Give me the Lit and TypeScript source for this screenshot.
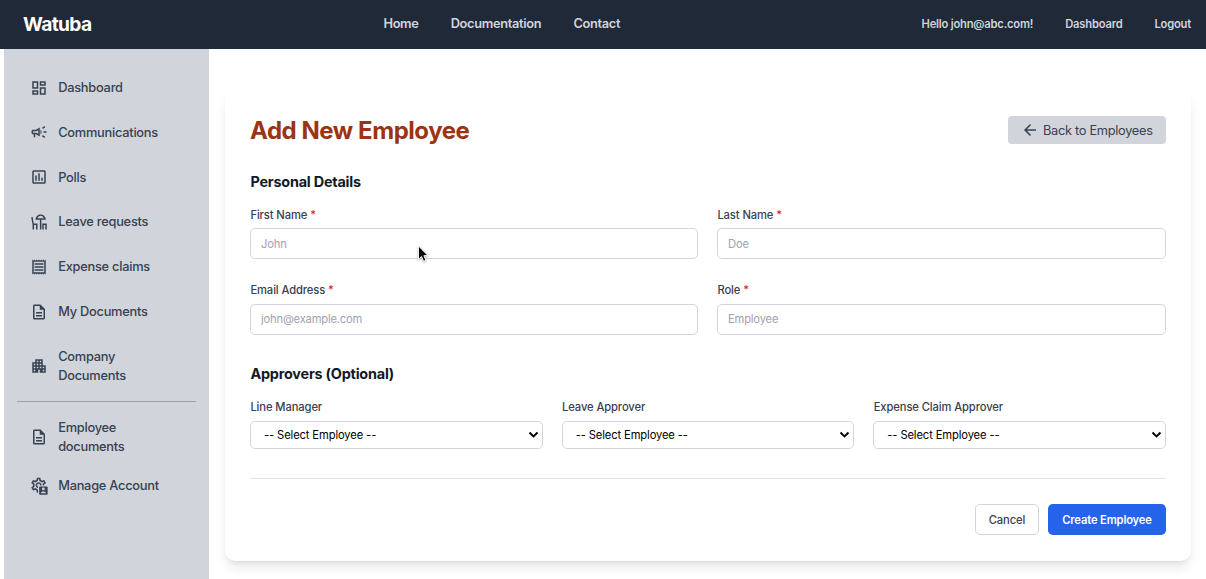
import { LitElement, html, css, svg } from "lit";
import { customElement } from "lit/decorators.js";

const icons: Record<string, unknown> = {
  dashboard: svg`<path d="M19 5v2h-4V5h4M9 5v6H5V5h4m10 8v6h-4v-6h4M9 17v2H5v-2h4M21 3h-8v6h8V3zM11 3H3v10h8V3zm10 8h-8v10h8V11zm-10 4H3v6h8v-6z"/>`,
  campaign: svg`<path d="M18 11v2h4v-2h-4zm-2 6.61c.96.71 2.21 1.65 3.2 2.39.4-.53.8-1.07 1.2-1.6-.99-.74-2.24-1.68-3.2-2.4-.4.54-.8 1.08-1.2 1.61zM20.4 5.6c-.4-.53-.8-1.07-1.2-1.6-.99.74-2.24 1.68-3.2 2.4.4.53.8 1.07 1.2 1.6.96-.72 2.21-1.65 3.2-2.4zM4 9c-1.1 0-2 .9-2 2v2c0 1.1.9 2 2 2h1v4h2v-4h1l5 3V6L8 9H4zm5.03 1.71L11 9.53v4.94l-1.97-1.18-.48-.29H4v-2h4.55l.48-.29zM15.5 12c0-1.33-.58-2.53-1.5-3.35v6.69c.92-.81 1.5-2.01 1.5-3.34z"/>`,
  poll: svg`<path d="M19 3H5c-1.1 0-2 .9-2 2v14c0 1.1.9 2 2 2h14c1.1 0 2-.9 2-2V5c0-1.1-.9-2-2-2zm0 16H5V5h14v14zM7 10h2v7H7zm4-3h2v10h-2zm4 6h2v4h-2z"/>`,
  leave: svg`<path d="M7.300 9C7.600 4.600 10.400 1.900 14.200 1.900S20.800 4.600 21.100 9Z M10 7.100h8.400C17.700 5 16.200 3.700 14.200 3.700S10.700 5 10 7.100Z" fill-rule="evenodd"/><path d="M13.200 8H15.200V22h-2zM1.600 5.600l2-.4 1.300 8.900H10V22H8v-5.900H5.400V22h-2v-6.500zM16.400 14.100H22.400V22h-2v-5.900h-2V22h-2z"/>`,
  receipt: svg`<path d="M19.500 3.500L18 2l-1.500 1.500L15 2l-1.500 1.500L12 2l-1.500 1.500L9 2 7.500 3.500 6 2 4.500 3.500 3 2v20l1.500-1.500L6 22l1.500-1.500L9 22l1.500-1.500L12 22l1.500-1.500L15 22l1.500-1.500L18 22l1.500-1.500L21 22V2l-1.500 1.500zM19 19.090H5V4.910h14v14.180zM6 15h12v2H6zm0-4h12v2H6zm0-4h12v2H6z"/>`,
  description: svg`<path d="M8 16h8v2H8zm0-4h8v2H8zm6-10H6c-1.100 0-2 .9-2 2v16c0 1.100.890 2 1.990 2H18c1.100 0 2-.9 2-2V8l-6-6zm4 18H6V4h7v5h5v11z"/>`,
  apartment: svg`<path d="M17 11V3H7v4H3v14h8v-4h2v4h8V11h-4zM7 19H5v-2h2v2zm0-4H5v-2h2v2zm0-4H5V9h2v2zm4 4H9v-2h2v2zm0-4H9V9h2v2zm0-4H9V5h2v2zm4 8h-2v-2h2v2zm0-4h-2V9h2v2zm0-4h-2V5h2v2zm4 12h-2v-2h2v2zm0-4h-2v-2h2v2z"/>`,
  manage: svg`<path transform="translate(-.5 -1)" d="M19.43 12.98c.04-.32.07-.64.07-.98 0-.34-.03-.66-.07-.98l2.11-1.65c.19-.15.24-.42.12-.64l-2-3.46c-.09-.16-.26-.25-.44-.25-.06 0-.12.01-.17.03l-2.49 1c-.52-.4-1.08-.73-1.69-.98l-.38-2.65C14.46 2.18 14.25 2 14 2h-4c-.25 0-.46.18-.49.42l-.38 2.65c-.61.25-1.17.59-1.69.98l-2.49-1c-.06-.02-.12-.03-.18-.03-.17 0-.34.09-.43.25l-2 3.46c-.13.22-.07.49.12.64l2.11 1.65c-.04.32-.07.65-.07.98 0 .33.03.66.07.98l-2.11 1.65c-.19.15-.24.42-.12.64l2 3.46c.09.16.26.25.44.25.06 0 .12-.01.17-.03l2.49-1c.52.4 1.08.73 1.69.98l.38 2.65c.03.24.24.42.49.42h4c.25 0 .46-.18.49-.42l.38-2.65c.61-.25 1.17-.59 1.69-.98l2.49 1c.06.02.12.03.18.03.17 0 .34-.09.43-.25l2-3.46c.12-.22.07-.49-.12-.64l-2.11-1.65zm-1.98-1.71c.04.31.05.52.05.73 0 .21-.02.43-.05.73l-.14 1.13.89.7 1.08.84-.7 1.21-1.27-.51-1.04-.42-.9.68c-.43.32-.84.56-1.25.73l-1.06.43-.16 1.13-.2 1.35h-1.4l-.19-1.35-.16-1.13-1.06-.43c-.43-.18-.83-.41-1.23-.71l-.91-.7-1.06.43-1.27.51-.7-1.21 1.08-.84.89-.7-.14-1.13c-.03-.31-.05-.54-.05-.74s.02-.43.05-.73l.14-1.13-.89-.7-1.08-.84.7-1.21 1.27.51 1.04.42.9-.68c.43-.32.84-.56 1.25-.73l1.06-.43.16-1.13.2-1.35h1.39l.19 1.35.16 1.13 1.06.43c.43.18.83.41 1.23.71l.91.7 1.06-.43 1.27-.51.7 1.21-1.07.85-.89.7.14 1.13zM12 8c-2.21 0-4 1.79-4 4s1.79 4 4 4 4-1.79 4-4-1.79-4-4-4zm0 6c-1.1 0-2-.9-2-2s.9-2 2-2 2 .9 2 2-.9 2-2 2z"/><path fill="#d1d5db" d="M10.700 11.200H24V24H10.700z"/><path fill-rule="evenodd" d="M13.200 12.500h9.300q1 0 1 1v9.200q0 1-1 1h-9.300q-1 0-1-1v-9.200q0-1 1-1ZM17.850 14a1.900 1.900 0 1 0 0 3.800 1.900 1.900 0 0 0 0-3.800ZM14.300 21.800h7.100c-.4-1.800-2-2.600-3.550-2.600s-3.150.8-3.550 2.600Z"/>`,
  back: svg`<path d="M20 11H7.830l5.590-5.590L12 4l-8 8 8 8 1.410-1.410L7.830 13H20v-2z"/>`,
};

const icon = (name: string, cls = "icon") =>
  html`<svg class=${cls} viewBox="0 0 24 24" fill="currentColor" aria-hidden="true">${icons[name]}</svg>`;

const mainLinks = [
  ["dashboard", "Dashboard"],
  ["campaign", "Communications"],
  ["poll", "Polls"],
  ["leave", "Leave requests"],
  ["receipt", "Expense claims"],
  ["description", "My Documents"],
  ["apartment", "Company Documents"],
];
const adminLinks = [
  ["description", "Employee documents"],
  ["manage", "Manage Account"],
];
const fields = [
  ["First Name", "John"],
  ["Last Name", "Doe"],
  ["Email Address", "john@example.com"],
  ["Role", "Employee"],
];
const approvers = ["Line Manager", "Leave Approver", "Expense Claim Approver"];

@customElement("app-root")
export class AppRoot extends LitElement {
  static styles = css`
    :host {
      display: block;
      height: 579px;
      overflow: hidden;
      position: relative;
      background: #fff;
      color: #374151;
      font-family: Inter, "Liberation Sans", sans-serif;
      font-size: 12.8px;
    }
    * { box-sizing: border-box; }
    a { color: inherit; text-decoration: none; white-space: nowrap; }
    header {
      height: 49px;
      background: #1f2937;
      color: #d1d5db;
      display: grid;
      grid-template-columns: 383.4px 1fr auto;
      align-items: center;
      padding-right: 15px;
      padding-bottom: 2px;
    }
    .brand { padding-left: 23px; color: #fff; font-size: 19.2px; font-weight: 700; letter-spacing: -0.65px; }
    .nav { display: flex; gap: 32px; font-weight: 600; letter-spacing: -0.3px; }
    .user { display: flex; gap: 32px; font-size: 11.2px; font-weight: 600; letter-spacing: -0.2px; }
    .body { display: flex; height: 530px; padding-left: 4px; }
    aside { width: 205px; background: #d1d5db; padding: 16.2px 13px 0; flex: none; }
    .item {
      display: flex;
      align-items: center;
      height: 44.8px;
      padding-left: 13px;
      gap: 10.2px;
      line-height: 19.2px;
      font-weight: 500;
      letter-spacing: -0.24px;
    }
    .item.wrap { height: 64px; white-space: normal; }
    .item.wrap span { width: 80px; }
    .item.last { height: 32px; }
    .icon { width: 18px; height: 18px; flex: none; }
    .rule { height: 1px; background: #9ca3af; margin: 2.8px 0 3px; }
    .rule ~ .last { margin-top: 1px; }
    main { flex: 1; padding: 41px 15px 0 16px; }
    .card {
      height: 471px;
      border-radius: 10px;
      background: #fff;
      padding: 26px 25px;
      box-shadow: 0 8px 12px -2.4px rgba(0,0,0,.1), 0 3.2px 4.8px -3.2px rgba(0,0,0,.1);
    }
    .head { display: flex; justify-content: space-between; height: 28px; align-items: center; }
    h1 { margin: 0; font-size: 24px; line-height: 29px; font-weight: 700; color: #9a3412; letter-spacing: -0.45px; padding-top: 1px; }
    .back {
      display: flex; align-items: center; gap: 4px; width: 158px; height: 28px; padding-left: 13px;
      border-radius: 4px; background: #d1d5db; letter-spacing: -0.3px;
    }
    .arrow { width: 18px; height: 18px; flex: none; }
    h2 { margin: 0; padding-left: .4px; font-size: 14.4px; line-height: 22px; font-weight: 700; color: #111827; letter-spacing: -0.2px; }
    .personal { margin-top: 27px; }
    .fields { display: grid; grid-template-columns: 448px 1fr; column-gap: 19px; row-gap: 21.2px; margin-top: 13px; }
    label { display: block; padding: 1px 0 0 .4px; font-size: 11.2px; font-weight: 500; line-height: 17px; letter-spacing: -0.1px; }
    .req { color: #dc2626; }
    input {
      display: block; width: 100%; height: 31px; margin-top: 4.4px; padding: 0 10px;
      border: 1px solid #d1d5db; border-radius: 4.8px; font: 400 11.2px Inter, sans-serif; background: #fff;
      letter-spacing: -0.18px; outline: none;
    }
    .fields > div { height: 54px; }
    input::placeholder { color: #9ca3af; opacity: 1; }
    .approvers { margin-top: 27.8px; }
    .selects { display: grid; grid-template-columns: repeat(3, 1fr); column-gap: 19px; margin-top: 13.5px; }
    .select {
      height: 28px; margin-top: 4.5px; border: 1px solid #d1d5db; border-radius: 4.8px; display: flex;
      align-items: center; justify-content: space-between; padding: 0 3px 0 13px; color: #000; font-size: 11.2px;
      letter-spacing: -0.12px;
    }
    .chev { width: 11px; height: 11px; }
    .actions {
      margin-top: 29px; border-top: 1px solid #e5e7eb; padding-top: 25px; display: flex;
      justify-content: flex-end; gap: 9px;
    }
    button { font: 500 11.2px Inter, sans-serif; height: 31px; padding: 1.2px 0 0; border-radius: 4.8px; letter-spacing: -0.1px; }
    .cancel { width: 64px; border: 1px solid #d1d5db; background: #fff; color: #374151; }
    .create { width: 118px; border: 0; background: #2563eb; color: #fff; font-weight: 600; letter-spacing: -0.15px; }
    .cursor { position: absolute; left: 416px; top: 244px; width: 14px; height: 20px; filter: drop-shadow(0 1px 1px rgba(0,0,0,.3)); }
  `;

  private link([name, text]: string[]) {
    const wraps = text === "Company Documents" || text === "Employee documents";
    const cls = wraps ? "item wrap" : text === "Manage Account" ? "item last" : "item";
    return html`<a class=${cls}>${icon(name)}<span>${text}</span></a>`;
  }

  render() {
    return html`
      <header>
        <a class="brand">Watuba</a>
        <nav class="nav"><a>Home</a><a>Documentation</a><a>Contact</a></nav>
        <div class="user"><a>Hello john@abc.com!</a><a>Dashboard</a><a>Logout</a></div>
      </header>
      <div class="body">
        <aside>
          ${mainLinks.map((l) => this.link(l))}
          <div class="rule"></div>
          ${adminLinks.map((l) => this.link(l))}
        </aside>
        <main>
          <section class="card">
            <div class="head">
              <h1>Add New Employee</h1>
              <a class="back">${icon("back", "arrow")}<span>Back to Employees</span></a>
            </div>
            <h2 class="personal">Personal Details</h2>
            <div class="fields">
              ${fields.map(([l, p]) => html`<div><label>${l} <span class="req">*</span></label><input placeholder=${p} /></div>`)}
            </div>
            <h2 class="approvers">Approvers (Optional)</h2>
            <div class="selects">
              ${approvers.map((l) => html`<div><label>${l}</label>
                <div class="select"><span>-- Select Employee --</span>
                  <svg class="chev" viewBox="0 0 11 11"><path d="M1.500 3.500l4 4 4-4" fill="none" stroke="#000" stroke-width="1.900"/></svg>
                </div></div>`)}
            </div>
            <div class="actions"><button class="cancel">Cancel</button><button class="create">Create Employee</button></div>
          </section>
        </main>
      </div>
      <svg class="cursor" viewBox="0 0 14 20"><path d="M2.500 2v13.200l3-2.800 2.100 4.900 2.300-1-2.100-4.700h4.100z" fill="#000" stroke="#fff" stroke-width=".9"/></svg>
    `;
  }
}
